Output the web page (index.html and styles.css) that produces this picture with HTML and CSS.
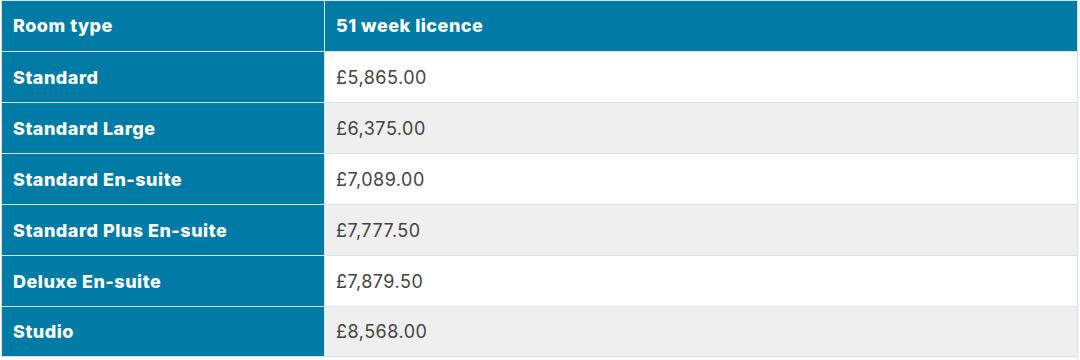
FILE: index.html
```html
<!DOCTYPE html>
<html lang="en">
<head>
<meta charset="utf-8">
<link rel="stylesheet" href="styles.css">
</head>
<body>
<table class="fees">
  <thead>
    <tr><th class="type">Room type</th><th class="head">51 week licence</th></tr>
  </thead>
  <tbody>
    <tr><th class="type">Standard</th><td class="price">£5,865.00</td></tr>
    <tr class="alt"><th class="type">Standard Large</th><td class="price">£6,375.00</td></tr>
    <tr><th class="type">Standard En-suite</th><td class="price">£7,089.00</td></tr>
    <tr class="alt"><th class="type">Standard Plus En-suite</th><td class="price">£7,777.50</td></tr>
    <tr><th class="type">Deluxe En-suite</th><td class="price">£7,879.50</td></tr>
    <tr class="alt last"><th class="type">Studio</th><td class="price">£8,568.00</td></tr>
  </tbody>
</table>
</body>
</html>
```
FILE: styles.css
```css
html, body { margin: 0; padding: 0; background: #ffffff; }
body { padding: 0 0 0 1px; }
.fees {
  width: 1077px;
  border-collapse: collapse;
  font-family: Inter, "Liberation Sans", sans-serif;
  font-size: 18px;
  letter-spacing: 0.5px;
}
.fees th, .fees td {
  border: 1px solid #d3e3ea;
  height: 51px;
  padding: 0 11px;
  text-align: left;
  vertical-align: middle;
  box-sizing: border-box;
}
.fees thead th { height: 51px; padding-bottom: 1px; }
.fees .last th, .fees .last td { height: 50px; }
.type {
  width: 323px;
  background: #007ba6;
  color: #ffffff;
  font-weight: 800;
}
.head {
  background: #007ba6;
  color: #ffffff;
  font-weight: 800;
}
.price {
  background: #ffffff;
  color: #444444;
  font-weight: 400;
}
.alt .price { background: #efefef; }
```
